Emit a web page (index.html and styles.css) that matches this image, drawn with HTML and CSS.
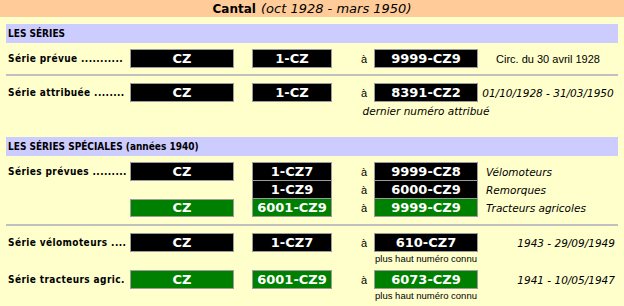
FILE: index.html
```html
<!DOCTYPE html>
<html lang="fr">
<head>
<meta charset="utf-8">
<title>Cantal</title>
<link rel="stylesheet" href="styles.css">
</head>
<body>
<div class="title"><b class="t-name">Cantal</b> <i class="t-dates">(oct 1928 - mars 1950)</i></div>
<div class="content">
  <div class="bar">LES SÉRIES</div>

  <div class="row r-first">
    <div class="label">Série prévue ...........</div>
    <div class="plate">CZ</div>
    <div></div>
    <div class="plate">1-CZ</div>
    <div class="a">à</div>
    <div class="plate">9999-CZ9</div>
    <div class="note center">Circ. du 30 avril 1928</div>
  </div>

  <div class="sep"></div>

  <div class="row r-after-sep">
    <div class="label">Série attribuée ........</div>
    <div class="plate">CZ</div>
    <div></div>
    <div class="plate">1-CZ</div>
    <div class="a">à</div>
    <div class="plate">8391-CZ2</div>
    <div class="note center it">01/10/1928 - 31/03/1950</div>
  </div>
  <div class="row caprow">
    <div class="cap it">dernier numéro attribué</div>
  </div>

  <div class="bar bar2">LES SÉRIES SPÉCIALES (années 1940)</div>

  <div class="row r-first">
    <div class="label">Séries prévues .........</div>
    <div class="plate">CZ</div>
    <div></div>
    <div class="plate">1-CZ7</div>
    <div class="a">à</div>
    <div class="plate">9999-CZ8</div>
    <div class="note left it">Vélomoteurs</div>
  </div>
  <div class="row">
    <div></div>
    <div></div>
    <div></div>
    <div class="plate stack">1-CZ9</div>
    <div class="a">à</div>
    <div class="plate stack">6000-CZ9</div>
    <div class="note left it">Remorques</div>
  </div>
  <div class="row">
    <div></div>
    <div class="plate green short">CZ</div>
    <div></div>
    <div class="plate green stack">6001-CZ9</div>
    <div class="a">à</div>
    <div class="plate green stack">9999-CZ9</div>
    <div class="note left it">Tracteurs agricoles</div>
  </div>

  <div class="sep sep2"></div>

  <div class="row r-after-sep">
    <div class="label">Série vélomoteurs ....</div>
    <div class="plate">CZ</div>
    <div></div>
    <div class="plate">1-CZ7</div>
    <div class="a">à</div>
    <div class="plate">610-CZ7</div>
    <div class="note right it">1943 - 29/09/1949</div>
  </div>
  <div class="row caprow small">
    <div class="cap">plus haut numéro connu</div>
  </div>

  <div class="row r-tract">
    <div class="label">Série tracteurs agric.</div>
    <div class="plate green">CZ</div>
    <div></div>
    <div class="plate green">6001-CZ9</div>
    <div class="a">à</div>
    <div class="plate green">6073-CZ9</div>
    <div class="note right it">1941 - 10/05/1947</div>
  </div>
  <div class="row caprow small">
    <div class="cap">plus haut numéro connu</div>
  </div>
</div>
</body>
</html>
```

FILE: styles.css
```css
html, body {
  margin: 0;
  padding: 0;
}
body {
  background: #ffffcc;
  width: 624px;
  height: 306px;
  overflow: hidden;
  font-family: "Liberation Sans", Arial, sans-serif;
  font-size: 11px;
  color: #000;
}
.title {
  height: 17px;
  line-height: 17px;
  background: #ffcc99;
  text-align: center;
  white-space: nowrap;
}
.t-name {
  font-family: "DejaVu Sans", sans-serif;
  font-weight: bold;
  font-size: 12px;
}
.t-dates {
  font-family: "DejaVu Sans", sans-serif;
  font-style: italic;
  font-size: 13px;
  margin-left: 2px;
}
.content {
  padding: 0 6px;
}
.bar {
  margin-top: 7px;
  height: 19px;
  line-height: 19px;
  background: #ccccff;
  padding-left: 2px;
  font-family: "DejaVu Sans", sans-serif;
  font-stretch: condensed;
  font-weight: bold;
  font-size: 10px;
  white-space: nowrap;
}
.bar2 {
  margin-top: 19px;
}
.row {
  display: grid;
  grid-template-columns: 124px 104px 18px 80px 42px 104px 1fr;
  align-items: center;
}
.r-first {
  margin-top: 6px;
}
.r-after-sep {
  margin-top: 7px;
}
.r-tract {
  margin-top: 5px;
}
.label {
  padding-left: 2px;
  font-family: "DejaVu Sans", sans-serif;
  font-stretch: condensed;
  font-weight: bold;
  font-size: 10px;
  letter-spacing: 0.4px;
  white-space: nowrap;
}
.plate {
  box-sizing: border-box;
  height: 19px;
  line-height: 17px;
  border: 1px solid #9c9c9c;
  background: #000;
  color: #fff;
  text-align: center;
  font-family: "DejaVu Sans", sans-serif;
  font-weight: bold;
  font-size: 13px;
  white-space: nowrap;
}
.plate.stack {
  height: 18px;
  border-top-width: 0;
}
.plate.short {
  height: 18px;
  line-height: 16px;
}
.plate.green {
  background: #008000;
}
.a {
  padding-left: 29px;
  font-size: 11px;
}
.note {
  white-space: nowrap;
  font-size: 11px;
}
.note.center {
  text-align: center;
}
.note.left {
  padding-left: 8px;
}
.note.right {
  text-align: right;
  padding-right: 3px;
}
.it {
  font-family: "DejaVu Sans", sans-serif;
  font-style: italic;
  font-size: 10.5px;
}
.sep {
  margin-top: 6px;
  height: 2px;
  background: #c0c0c0;
}
.sep2 {
  margin-top: 7px;
}
.caprow {
  margin-top: 2px;
  height: 14px;
}
.caprow.small {
  margin-top: 1px;
  height: 12px;
}
.cap {
  grid-column: 6;
  display: flex;
  justify-content: center;
  white-space: nowrap;
  line-height: 14px;
}
.small .cap {
  font-size: 9.5px;
  line-height: 12px;
}
```
